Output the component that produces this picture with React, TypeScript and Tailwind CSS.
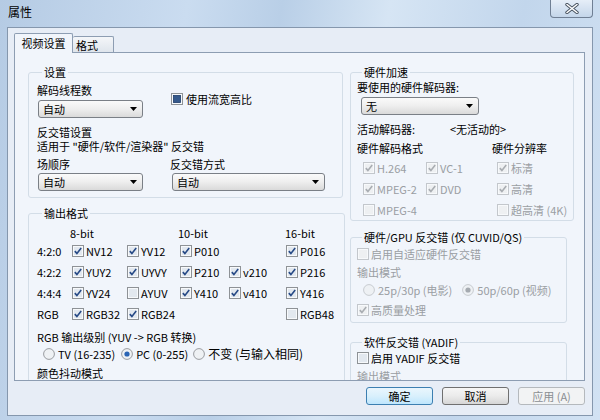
import React from 'react';

type BoxProps = { checked?: boolean; disabled?: boolean; mixed?: boolean };

const CheckBox: React.FC<BoxProps> = ({ checked, disabled, mixed }) => (
  <svg width="12" height="12" viewBox="0 0 12 12" className="shrink-0">
    <rect x="0.5" y="0.5" width="11" height="11" fill="#f7f9fb" stroke={disabled ? '#c3c7cc' : '#8e9296'} />
    <rect x="2" y="2" width="8" height="8" fill={disabled ? '#eef0f2' : '#e2e8ef'} />
    {mixed && <rect x="2.5" y="2.5" width="7" height="7" fill="#35598c" stroke="#203e6a" strokeWidth="0.8" />}
    {checked && (
      <path d="M2.8 6.1 L4.9 8.4 L9.2 2.9" fill="none" stroke={disabled ? '#a9adb2' : '#274a86'} strokeWidth="1.6" />
    )}
  </svg>
);

const Radio: React.FC<BoxProps> = ({ checked, disabled }) => (
  <svg width="12" height="12" viewBox="0 0 12 12" className="shrink-0">
    <circle cx="6" cy="6" r="5.4" fill="#eef1f4" stroke={disabled ? '#c3c7cc' : '#8e9296'} strokeWidth="0.9" />
    {checked && <circle cx="6" cy="6" r="2.6" fill={disabled ? '#a5aab0' : '#2a64b4'} />}
  </svg>
);

const Check: React.FC<BoxProps & { label: string; className?: string }> = ({ label, checked, disabled, mixed, className }) => (
  <div className={`flex items-center gap-[2px] whitespace-nowrap ${className ?? ''}`}>
    <CheckBox checked={checked} disabled={disabled} mixed={mixed} />
    <span className={disabled ? 'text-[#9a9ea3]' : ''}>{label}</span>
  </div>
);

const Combo: React.FC<{ value: string; className?: string }> = ({ value, className }) => (
  <div
    className={`flex h-[18px] items-center justify-between rounded-[3px] border border-[#7a7f86] bg-gradient-to-b from-[#fafafa] via-[#eeeeee] to-[#dadada] pl-[4px] pr-[5px] ${className ?? ''}`}
  >
    <span>{value}</span>
    <svg width="7" height="4" viewBox="0 0 7 4">
      <path d="M0 0 H7 L3.5 4 Z" fill="#000" />
    </svg>
  </div>
);

const Group: React.FC<{ title: string; className?: string; children: React.ReactNode }> = ({ title, className, children }) => (
  <fieldset className={`rounded-[3px] border border-[#d3dde7] ${className ?? ''}`}>
    <legend className="ml-[5px] px-[2px] leading-[14px]">{title}</legend>
    {children}
  </fieldset>
);

const Btn: React.FC<{ label: string; kind?: 'default' | 'disabled' }> = ({ label, kind }) => {
  const look =
    kind === 'default'
      ? 'border-[#3c7fb1] bg-gradient-to-b from-[#eaf6fd] via-[#d9f0fc] to-[#bee6fd]'
      : kind === 'disabled'
        ? 'border-[#b5b9bd] bg-[#f2f3f4] text-[#8a8e92]'
        : 'border-[#707070] bg-gradient-to-b from-[#f6f6f6] via-[#ebebeb] to-[#d6d6d6]';
  return (
    <div className={`flex h-[18px] w-[67px] items-center justify-center rounded-[3px] border ${look}`}>{label}</div>
  );
};

const rows: { tag: string; items: ([string, boolean] | null)[] }[] = [
  { tag: '4:2:0', items: [['NV12', true], ['YV12', true], ['P010', true], null, ['P016', true]] },
  { tag: '4:2:2', items: [['YUY2', true], ['UYVY', true], ['P210', true], ['v210', true], ['P216', true]] },
  { tag: '4:4:4', items: [['YV24', true], ['AYUV', false], ['Y410', true], ['v410', true], ['Y416', true]] },
  { tag: 'RGB', items: [['RGB32', true], ['RGB24', true], null, null, ['RGB48', false]] },
];

const colW = ['w-[55px]', 'w-[53px]', 'w-[49px]', 'w-[57px]', 'w-[50px]'];

const hwRows: ([string, boolean] | null)[][] = [
  [['H.264', true], ['VC-1', true], ['标清', true]],
  [['MPEG-2', true], ['DVD', true], ['高清', true]],
  [['MPEG-4', false], null, ['超高清 (4K)', false]],
];

export default function App() {
  return (
    <div className="relative h-[420px] w-[600px] overflow-hidden bg-[linear-gradient(100deg,#b5cbe4_0%,#cadcf0_28%,#b9cfe7_42%,#d6e5f4_58%,#c2d6ec_78%,#d2e2f3_100%)] font-['Noto_Sans_CJK_SC',sans-serif] text-[11px] leading-[14px] text-black">
      {/* title bar */}
      <div className="flex h-[27px]">
        <span className="pl-[8px] pt-[5px] text-[12px]">属性</span>
        <div className="ml-auto mr-[7px] flex h-[18px] w-[43px] items-center justify-center rounded-b-[4px] border border-t-0 border-[#6f7f94] bg-gradient-to-b from-[#e6eef8] to-[#c4d6ea]">
          <svg width="14" height="11" viewBox="0 0 14 11">
            <path d="M2 1.5 L12 9.5 M12 1.5 L2 9.5" stroke="#45505e" strokeWidth="3.4" strokeLinecap="round" />
            <path d="M2 1.5 L12 9.5 M12 1.5 L2 9.5" stroke="#ffffff" strokeWidth="1.6" strokeLinecap="round" />
          </svg>
        </div>
      </div>

      {/* client */}
      <div className="mx-[7px] flex h-[389px] flex-col border border-[#8597ad] bg-[#e7edf6]">
        {/* tabs */}
        <div className="relative z-10 -mb-px flex h-[25px] items-end pl-[6px] pt-[5px]">
          <div className="flex h-[20px] w-[59px] items-start justify-center rounded-t-[2px] border border-b-0 border-[#8d9db2] bg-[#f1f5fb] pt-[2px]">
            视频设置
          </div>
          <div className="mb-px flex h-[16px] w-[41px] items-center rounded-t-[2px] border border-b-0 border-l-0 border-[#8d9db2] bg-gradient-to-b from-[#f4f6f9] to-[#dfe5ec] pl-[3px]">
            格式
          </div>
        </div>

        {/* page */}
        <div className="ml-[6px] flex h-[329px] w-[571px] gap-[7px] overflow-hidden border border-[#8d9db2] bg-[#f1f5fb] pl-[13px] pt-[12px]">
          {/* left column */}
          <div className="flex w-[315px] shrink-0 flex-col">
            <Group title="设置" className="px-[8px] pb-[6px]">
              <div className="flex items-center">
                <div className="w-[134px] shrink-0">
                  <div className="mt-[4px]">解码线程数</div>
                  <Combo value="自动" className="ml-[1px] mt-[3px] w-[105px]" />
                </div>
                <Check label="使用流宽高比" mixed className="gap-[3px]" />
              </div>
              <div className="mt-[7px]">反交错设置</div>
              <div>适用于 "硬件/软件/渲染器" 反交错</div>
              <div className="mt-[4px] flex">
                <div className="w-[133px]">场顺序</div>
                <div>反交错方式</div>
              </div>
              <div className="mt-[2px] flex">
                <Combo value="自动" className="ml-[1px] w-[105px]" />
                <Combo value="自动" className="ml-[29px] w-[153px]" />
              </div>
            </Group>

            <Group title="输出格式" className="mt-[8px] px-[8px]">
              <div className="mt-[6px] flex">
                <div className="w-[33px]" />
                <div className="w-[108px]">8-bit</div>
                <div className="w-[107px]">10-bit</div>
                <div>16-bit</div>
              </div>
              {rows.map((r) => (
                <div key={r.tag} className="flex h-[21px] items-center">
                  <div className="w-[35px] shrink-0">{r.tag}</div>
                  {r.items.map((it, i) => (
                    <div key={i} className={`${colW[i]} shrink-0`}>
                      {it && <Check label={it[0]} checked={it[1]} />}
                    </div>
                  ))}
                </div>
              ))}
              <div className="mt-[6px]">RGB 输出级别 (YUV -&gt; RGB 转换)</div>
              <div className="mt-[3px] flex items-center whitespace-nowrap pl-[6px]">
                <Radio />
                <span className="ml-[3px]">TV (16-235)</span>
                <span className="ml-[6px]">
                  <Radio checked />
                </span>
                <span className="ml-[3px]">PC (0-255)</span>
                <span className="ml-[5px]">
                  <Radio />
                </span>
                <span className="ml-[3px] text-[12px]">不变 (与输入相同)</span>
              </div>
              <div className="mt-[5px]">颜色抖动模式</div>
              <div className="h-[30px]" />
            </Group>
          </div>

          {/* right column */}
          <div className="flex w-[217px] shrink-0 flex-col">
            <Group title="硬件加速" className="px-[6px]">
              <div className="mt-[1px]">要使用的硬件解码器:</div>
              <Combo value="无" className="ml-[4px] mt-[3px] w-[118px]" />
              <div className="mt-[7px] flex">
                <div className="w-[93px]">活动解码器:</div>
                <div>&lt;无活动的&gt;</div>
              </div>
              <div className="mt-[5px] flex">
                <div className="w-[135px]">硬件解码格式</div>
                <div>硬件分辨率</div>
              </div>
              <div className="mt-[2px] pl-[6px]">
                {hwRows.map((row, ri) => (
                  <div key={ri} className="flex h-[21px] items-center">
                    {row.map((it, i) => (
                      <div key={i} className={`${['w-[63px]', 'w-[71px]', 'w-[70px]'][i]} shrink-0`}>
                        {it && <Check label={it[0]} checked={it[1]} disabled />}
                      </div>
                    ))}
                  </div>
                ))}
              </div>
            </Group>

            <Group title="硬件/GPU 反交错 (仅 CUVID/QS)" className="mt-[9px] px-[6px] pb-[5px]">
              <Check label="启用自适应硬件反交错" disabled className="mt-[3px]" />
              <div className="mt-[4px] text-[#9a9ea3]">输出模式</div>
              <div className="mt-[4px] flex items-center whitespace-nowrap pl-[6px] text-[#9a9ea3]">
                <Radio disabled />
                <span className="ml-[3px]">25p/30p (电影)</span>
                <span className="ml-[10px]">
                  <Radio checked disabled />
                </span>
                <span className="ml-[3px]">50p/60p (视频)</span>
              </div>
              <Check label="高质量处理" checked disabled className="mt-[6px]" />
            </Group>

            <Group title="软件反交错 (YADIF)" className="mt-[12px] px-[6px]">
              <Check label="启用 YADIF 反交错" className="mt-[2px]" />
              <div className="mt-[4px] text-[#9a9ea3]">输出模式</div>
              <div className="h-[30px]" />
            </Group>
          </div>
        </div>

        {/* buttons */}
        <div className="mt-[6px] flex justify-end gap-[9px] pr-[7px]">
          <Btn label="确定" kind="default" />
          <Btn label="取消" />
          <Btn label="应用 (A)" kind="disabled" />
        </div>
      </div>
    </div>
  );
}
